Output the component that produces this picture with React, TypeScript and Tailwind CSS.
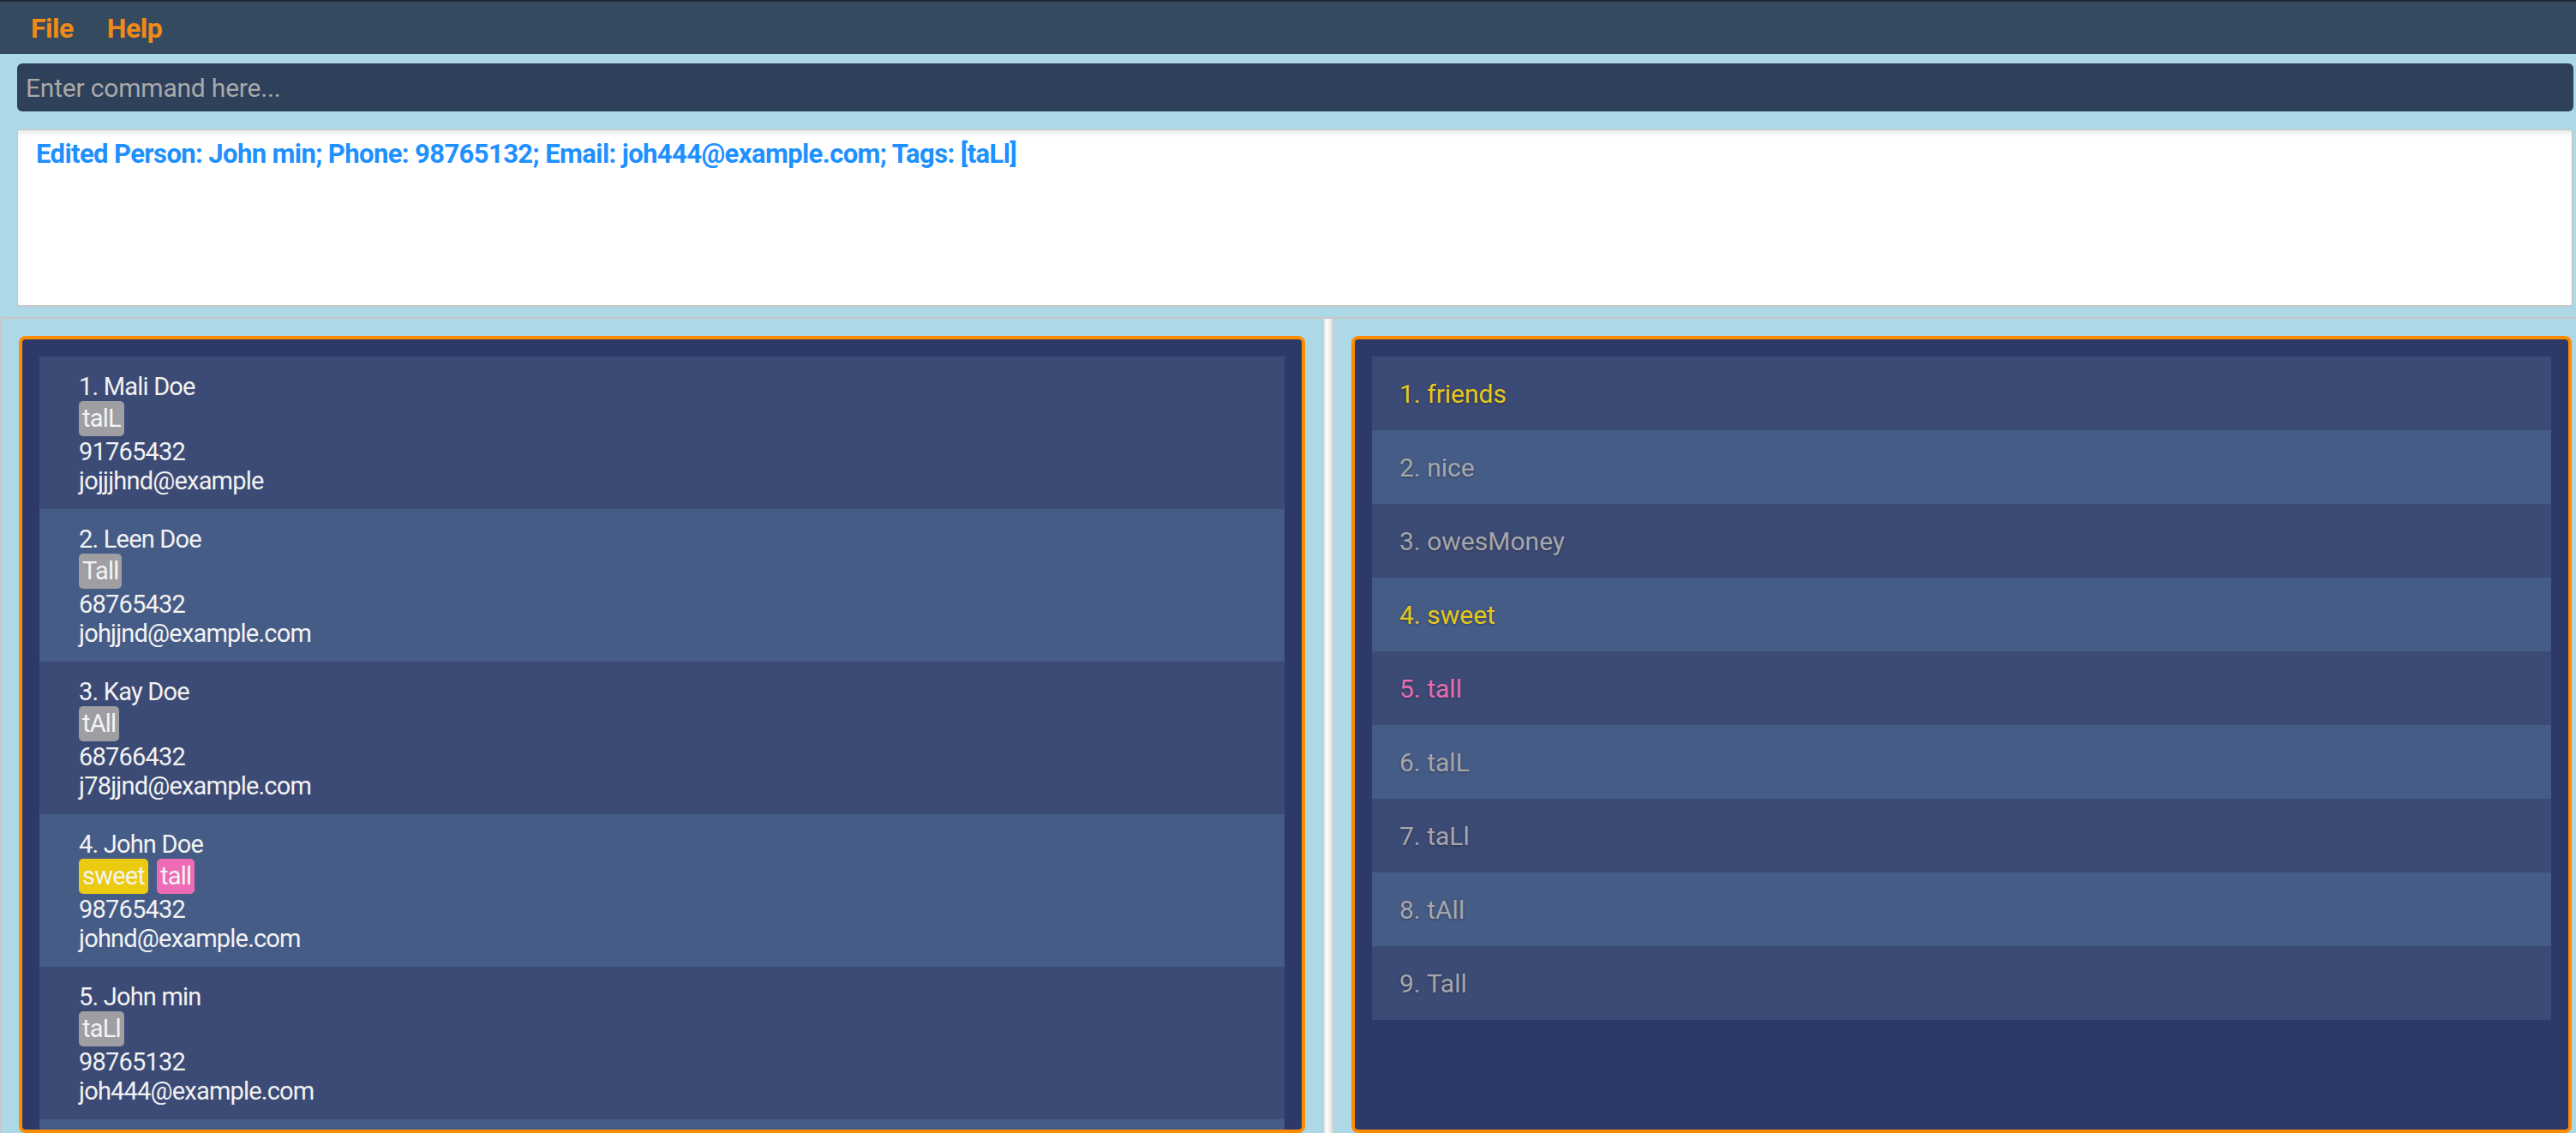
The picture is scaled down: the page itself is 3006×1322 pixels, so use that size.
import React from "react";

type Tag = { name: string; color: "gray" | "yellow" | "pink" };
type Person = { name: string; tags: Tag[]; phone: string; email: string };

const persons: Person[] = [
  { name: "1. Mali Doe", tags: [{ name: "talL", color: "gray" }], phone: "91765432", email: "jojjjhnd@example" },
  { name: "2. Leen Doe", tags: [{ name: "Tall", color: "gray" }], phone: "68765432", email: "johjjnd@example.com" },
  { name: "3. Kay Doe", tags: [{ name: "tAll", color: "gray" }], phone: "68766432", email: "j78jjnd@example.com" },
  {
    name: "4. John Doe",
    tags: [
      { name: "sweet", color: "yellow" },
      { name: "tall", color: "pink" },
    ],
    phone: "98765432",
    email: "johnd@example.com",
  },
  { name: "5. John min", tags: [{ name: "taLl", color: "gray" }], phone: "98765132", email: "joh444@example.com" },
];

const tagList: { label: string; color: "gray" | "yellow" | "pink" }[] = [
  { label: "1. friends", color: "yellow" },
  { label: "2. nice", color: "gray" },
  { label: "3. owesMoney", color: "gray" },
  { label: "4. sweet", color: "yellow" },
  { label: "5. tall", color: "pink" },
  { label: "6. talL", color: "gray" },
  { label: "7. taLl", color: "gray" },
  { label: "8. tAll", color: "gray" },
  { label: "9. Tall", color: "gray" },
];

function tagBg(c: Tag["color"]) {
  if (c === "yellow") return "bg-[#ebca0f]";
  if (c === "pink") return "bg-[#ee6bb5]";
  return "bg-[#9e9ea3]";
}

function textColor(c: Tag["color"]) {
  if (c === "yellow") return "text-[#e8c71a]";
  if (c === "pink") return "text-[#e86cb1]";
  return "text-[#a6a6ab]";
}

export default function App() {
  return (
    <div className="h-[1322px] w-[3006px] overflow-hidden bg-[#add8e6] flex flex-col font-['Roboto','Liberation_Sans',sans-serif]">
      {/* Menu bar */}
      <div className="h-[63px] shrink-0 bg-[#364a5f] border-t-2 border-[#1c2836] flex items-center gap-[39px] pl-[36px] text-[32px] font-bold text-[#f28a17] tracking-[-0.5px]">
        <span>File</span>
        <span>Help</span>
      </div>

      {/* Command box */}
      <div className="pt-[11px] pl-[20px] pr-[3px] shrink-0">
        <div className="h-[56px] rounded-[6px] bg-[#2e405a] flex items-center pl-[10px] text-[30px] text-[#a9a9a9] tracking-[-0.2px]">
          Enter command here...
        </div>
      </div>

      {/* Result box */}
      <div className="pt-[21px] pl-[20px] pr-[4px] shrink-0">
        <div className="h-[207px] bg-white border border-[#c4c4c4] border-b-2 border-b-[#c8c8c8] rounded-[3px] shadow-[inset_0_4px_5px_rgba(0,0,0,0.08)] pl-[21px] pt-[9px] text-[31px] leading-[38px] font-bold text-[#1e90ff] tracking-[-0.6px]">
          Edited Person: John min; Phone: 98765132; Email: joh444@example.com; Tags: [taLl]
        </div>
      </div>

      {/* Split pane */}
      <div className="mt-[12px] flex-1 min-h-0 flex border-t-2 border-l-2 border-[#c8c8c8]">
        {/* Left */}
        <div className="w-[1543px] shrink-0 pl-[20px] pr-[22px] pt-[20px] flex flex-col min-h-0">
          <div className="flex-1 border-4 border-[#ff8c00] rounded-[8px] bg-[#2d3a67] p-[20px] pb-0 overflow-hidden">
            <div className="flex flex-col">
              {persons.map((p, i) => (
                <div
                  key={p.name}
                  className={`h-[178px] shrink-0 pl-[46px] pt-[18px] text-[29px] tracking-[-0.8px] text-[#f2f2f2] ${
                    i % 2 === 0 ? "bg-[#3c4b75]" : "bg-[#455c87]"
                  }`}
                >
                  <div className="h-[34px] leading-[34px]">{p.name}</div>
                  <div className="flex gap-[10px] h-[41px]">
                    {p.tags.map((t) => (
                      <span
                        key={t.name}
                        className={`h-[41px] leading-[41px] px-[4px] rounded-[5px] text-[#f4f4f4] ${tagBg(t.color)}`}
                      >
                        {t.name}
                      </span>
                    ))}
                  </div>
                  <div className="h-[34px] leading-[34px] mt-[1px]">{p.phone}</div>
                  <div className="h-[34px] leading-[34px]">{p.email}</div>
                </div>
              ))}
              <div className="h-[178px] shrink-0 bg-[#455c87]" />
            </div>
          </div>
        </div>

        {/* Divider */}
        <div className="w-[12px] shrink-0 bg-[linear-gradient(to_right,#e2e2e2,#fdfdfd_25%,#eeeeee_60%,#c6c6c6)]" />

        {/* Right */}
        <div className="flex-1 min-w-0 pl-[20px] pr-[5px] pt-[20px] flex flex-col min-h-0">
          <div className="flex-1 border-4 border-[#ff8c00] rounded-[8px] bg-[#2d3a67] p-[20px] pb-0 overflow-hidden">
            <div className="flex flex-col">
              {tagList.map((t, i) => (
                <div
                  key={t.label}
                  className={`h-[86px] shrink-0 flex items-center pl-[32px] text-[30px] [text-shadow:0_1px_3px_rgba(0,0,0,0.35)] ${textColor(
                    t.color
                  )} ${i % 2 === 0 ? "bg-[#3c4b75]" : "bg-[#455c87]"}`}
                >
                  {t.label}
                </div>
              ))}
            </div>
          </div>
        </div>
      </div>
    </div>
  );
}
